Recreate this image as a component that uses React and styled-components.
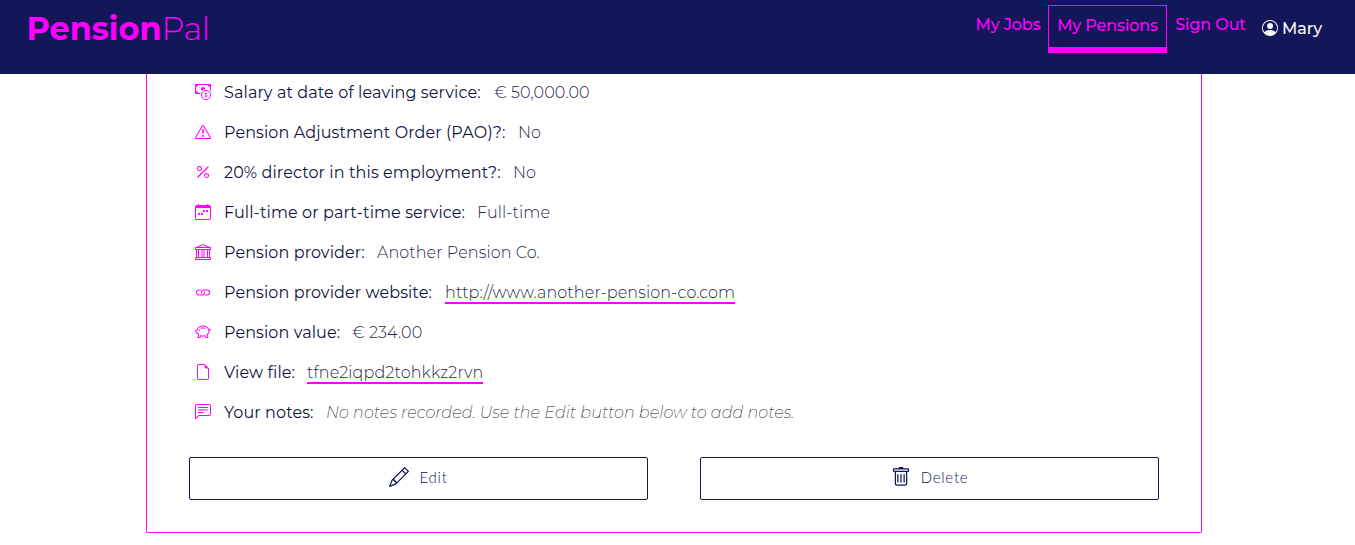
import React from 'react';
import styled, { createGlobalStyle } from 'styled-components';
import {
  BsPersonCircle, BsCashCoin, BsExclamationTriangle, BsPercent, BsCalendarWeek, BsBank,
  BsLink, BsPiggyBank, BsFileEarmark, BsChatLeftText, BsPencil, BsTrash,
} from 'react-icons/bs';

const navy = '#13175a';
const pink = '#ff00ff';

const GlobalStyle = createGlobalStyle`
  * { box-sizing: border-box; }
  body {
    margin: 0;
    background: #fff;
    color: #10133f;
    font: 400 16px/24px Montserrat, Inter, sans-serif;
    overflow: hidden;
  }
`;

const Page = styled.div`
  height: 545px;
  display: flex;
  flex-direction: column;
`;

const Header = styled.header`
  height: 74px;
  flex: none;
  background: ${navy};
  display: flex;
  justify-content: space-between;
  align-items: flex-start;
  padding: 5px 33px 0 26.5px;
`;

const Logo = styled.div`
  display: flex;
  color: ${pink};
  font-size: 32px;
  line-height: 48px;
  font-weight: 300;
  letter-spacing: -0.5px;
`;

const LogoStrong = styled.span`
  font-weight: 700;
  letter-spacing: 0;
`;

const Nav = styled.nav`
  display: flex;
  align-items: flex-start;
`;

const NavLink = styled.a`
  height: 48px;
  width: ${(p) => p.$width}px;
  padding-top: 8px;
  text-align: center;
  white-space: nowrap;
  color: ${pink};
  font-weight: 500;
  letter-spacing: -0.12px;
  border: ${(p) => (p.$active ? `1px solid ${pink}` : '0')};
  border-bottom: ${(p) => (p.$active ? `6px solid ${pink}` : '0')};
`;

const User = styled.div`
  display: flex;
  align-items: flex-start;
  gap: 4px;
  height: 24px;
  margin: 12px 0 0 8px;
  color: #f8f8f8;
  font-weight: 500;
  letter-spacing: -0.1px;

  svg { margin-top: 3px; }
`;

const Card = styled.main`
  width: 1056px;
  height: 459px;
  margin-left: 146px;
  padding: 0 42px;
  border: 1px solid ${pink};
  border-top: 0;
  border-radius: 0 0 2px 2px;
`;

const Details = styled.ul`
  margin: 0;
  padding: 0 0 0 6px;
  list-style: none;
`;

const Row = styled.li`
  height: 40px;
  padding-top: 7px;
  display: flex;
  align-items: flex-start;
  white-space: nowrap;
  letter-spacing: 0.1px;

  svg {
    flex: none;
    margin: 3px 13px 0 0;
    color: ${pink};
  }
`;

const Label = styled.span`
  width: ${(p) => p.$width}px;
`;

const Value = styled.span`
  font-weight: 300;
  color: #25274a;
`;

const Anchor = styled(Value)`
  height: 23px;
  letter-spacing: 0.11px;
  border-bottom: 2px solid ${pink};
`;

const Note = styled(Value)`
  font-style: italic;
  font-weight: 200;
  letter-spacing: 0.07px;
  color: #222;
`;

const Actions = styled.div`
  display: grid;
  grid-template-columns: 459px 459px;
  gap: 52px;
  margin-top: 23px;
`;

const Button = styled.button`
  height: 43px;
  display: flex;
  align-items: center;
  justify-content: center;
  gap: 10px;
  padding: 0 0 3px;
  background: #fff;
  border: 1px solid ${navy};
  border-radius: 2px;
  color: ${navy};
  font: 300 15px/20px Lato, sans-serif;
  letter-spacing: 0.75px;
`;

const rows = [
  { icon: BsCashCoin, label: 'Salary at date of leaving service:', width: 270, value: '€ 50,000.00' },
  { icon: BsExclamationTriangle, label: 'Pension Adjustment Order (PAO)?:', width: 294, value: 'No' },
  { icon: BsPercent, label: '20% director in this employment?:', width: 289, value: 'No' },
  { icon: BsCalendarWeek, label: 'Full-time or part-time service:', width: 253, value: 'Full-time' },
  { icon: BsBank, label: 'Pension provider:', width: 153, value: 'Another Pension Co.' },
  { icon: BsLink, label: 'Pension provider website:', width: 221, value: 'http://www.another-pension-co.com', kind: Anchor },
  { icon: BsPiggyBank, label: 'Pension value:', width: 128, value: '€ 234.00' },
  { icon: BsFileEarmark, label: 'View file:', width: 83, value: 'tfne2iqpd2tohkkz2rvn', kind: Anchor },
  { icon: BsChatLeftText, label: 'Your notes:', width: 102, value: 'No notes recorded. Use the Edit button below to add notes.', kind: Note },
];

export default function App() {
  return (
    <Page>
      <GlobalStyle />
      <Header>
        <Logo><LogoStrong>Pension</LogoStrong>Pal</Logo>
        <Nav>
          <NavLink $width={80}>My Jobs</NavLink>
          <NavLink $active $width={119}>My Pensions</NavLink>
          <NavLink $width={87}>Sign Out</NavLink>
          <User><BsPersonCircle size={16} />Mary</User>
        </Nav>
      </Header>
      <Card>
        <Details>
          {rows.map(({ icon: Icon, label, width, value, kind: Kind = Value }) => (
            <Row key={label}>
              <Icon size={16} />
              <Label $width={width}>{label}</Label>
              <Kind>{value}</Kind>
            </Row>
          ))}
        </Details>
        <Actions>
          <Button><BsPencil size={20} />Edit</Button>
          <Button><BsTrash size={20} />Delete</Button>
        </Actions>
      </Card>
    </Page>
  );
}
